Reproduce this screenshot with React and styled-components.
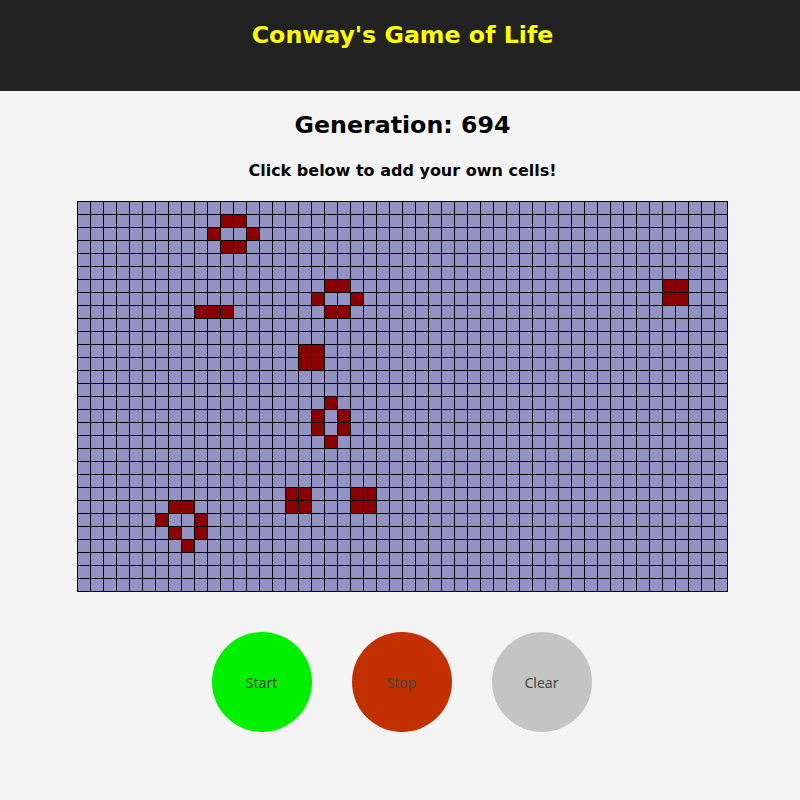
import React from "react";
import styled, { createGlobalStyle } from "styled-components";

const GlobalStyle = createGlobalStyle`
  html, body { margin: 0; padding: 0; background: #f4f4f4; }
  body { font-family: "DejaVu Sans", sans-serif; }
`;

const ROWS = 30;
const COLS = 50;
const LIVE = [
  [1, 11], [1, 12], [2, 10], [2, 13], [3, 11], [3, 12],
  [8, 9], [8, 10], [8, 11],
  [6, 19], [6, 20], [7, 18], [7, 21], [8, 19], [8, 20],
  [6, 45], [6, 46], [7, 45], [7, 46],
  [11, 17], [11, 18], [12, 17], [12, 18],
  [15, 19], [16, 18], [16, 20], [17, 18], [17, 20], [18, 19],
  [22, 16], [22, 17], [23, 16], [23, 17],
  [22, 21], [22, 22], [23, 21], [23, 22],
  [23, 7], [23, 8], [24, 6], [24, 9], [25, 7], [25, 9], [26, 8],
];
const liveSet = new Set(LIVE.map(([r, c]) => `${r}-${c}`));

const Header = styled.header`
  height: 91px;
  background: #222222;
  padding-left: 5px;
  display: flex;
  justify-content: center;
  box-sizing: border-box;
`;

const Title = styled.h1`
  margin: 20px 0 0;
  font-size: 23.7px;
  line-height: 30px;
  font-weight: bold;
  color: #ffff00;
  font-family: "DejaVu Sans", sans-serif;
`;

const Main = styled.main`
  display: flex;
  flex-direction: column;
  align-items: center;
  padding-left: 5px;
`;

const Generation = styled.h2`
  margin: 19px 0 0;
  font-size: 23.7px;
  line-height: 30px;
  font-weight: bold;
  color: #000;
`;

const Hint = styled.p`
  margin: 21px 0 0;
  font-size: 16px;
  line-height: 20px;
  font-weight: bold;
  color: #000;
`;

const Board = styled.div`
  margin-top: 20px;
  display: grid;
  grid-template-columns: repeat(${COLS}, 12px);
  grid-auto-rows: 12px;
  gap: 1px;
  padding: 1px;
  background: #000;
`;

const Cell = styled.div`
  background: ${(p) => (p.$alive ? "#8b0000" : "#9292c4")};
`;

const Controls = styled.div`
  margin-top: 40px;
  margin-right: 2px;
  display: flex;
  gap: 40px;
`;

const RoundButton = styled.button`
  width: 100px;
  height: 100px;
  border-radius: 50%;
  border: none;
  padding: 0;
  background: ${(p) => p.$color};
  color: #444;
  font-family: "Noto Sans", sans-serif;
  font-size: 14px;
  cursor: pointer;
`;

export default function App() {
  const cells = [];
  for (let r = 0; r < ROWS; r++) {
    for (let c = 0; c < COLS; c++) {
      cells.push(<Cell key={`${r}-${c}`} $alive={liveSet.has(`${r}-${c}`)} />);
    }
  }
  return (
    <>
      <GlobalStyle />
      <Header>
        <Title>Conway's Game of Life</Title>
      </Header>
      <Main>
        <Generation>Generation: 694</Generation>
        <Hint>Click below to add your own cells!</Hint>
        <Board>{cells}</Board>
        <Controls>
          <RoundButton $color="#00f000">Start</RoundButton>
          <RoundButton $color="#c23000">Stop</RoundButton>
          <RoundButton $color="#c4c4c4">Clear</RoundButton>
        </Controls>
      </Main>
    </>
  );
}
